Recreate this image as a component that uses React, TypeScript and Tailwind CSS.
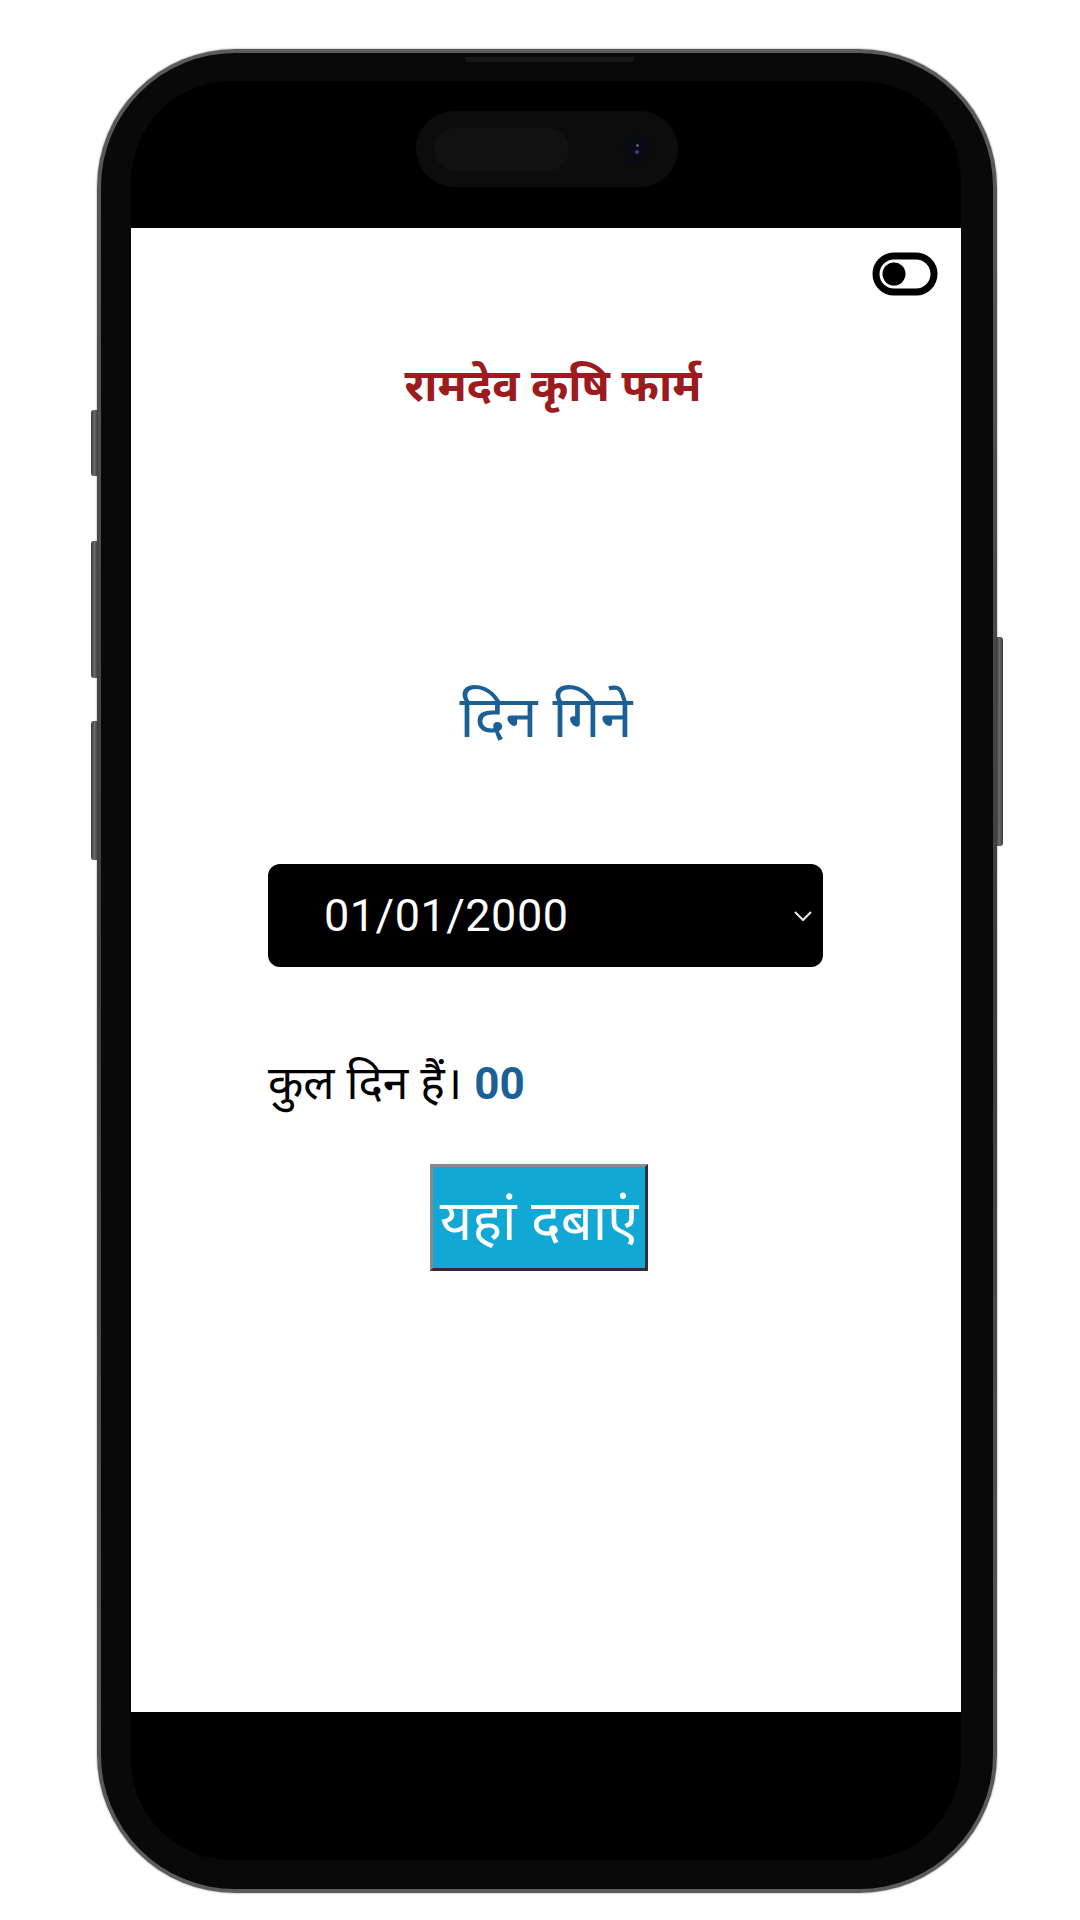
import { useState } from "react";

const SideButton = ({ className }: { className: string }) => (
  <div
    className={`absolute w-[7px] bg-gradient-to-r from-[#3a3a3a] via-[#6a6a6a] to-[#3a3a3a] ${className}`}
  />
);

const ToggleIcon = () => (
  <svg width="66" height="44" viewBox="0 0 66 44" fill="none">
    <rect x="4" y="4" width="58" height="36" rx="18" stroke="#000" strokeWidth="7" />
    <circle cx="22" cy="22" r="11.5" fill="#000" />
  </svg>
);

export default function App() {
  const [date] = useState("01/01/2000");
  const [days] = useState("00");

  return (
    <div
      className="w-[1080px] h-[1920px] bg-white flex pl-[97px] pt-[49px]"
      style={{ fontFamily: "'Noto Sans', Roboto, sans-serif" }}
    >
      <div className="relative w-[900px] h-[1844px]">
        {/* side buttons */}
        <SideButton className="left-[-6px] top-[361px] h-[66px] rounded-l-[3px]" />
        <SideButton className="left-[-6px] top-[492px] h-[137px] rounded-l-[3px]" />
        <SideButton className="left-[-6px] top-[672px] h-[139px] rounded-l-[3px]" />
        <SideButton className="left-[899px] top-[588px] h-[209px] rounded-r-[3px]" />

        <div className="w-full h-full rounded-[138px] p-[4px] bg-gradient-to-b from-[#5c5c5c] via-[#3c3c3c] to-[#5c5c5c] shadow-[0_0_2px_rgba(0,0,0,0.5)]">
          <div className="relative w-full h-full rounded-[134px] bg-[#090909] pl-[30px] pr-[32px] pt-[28px] pb-[29px] flex">
            {/* speaker slit */}
            <div className="absolute left-[364px] top-[4px] w-[169px] h-[5px] rounded-b-[4px] bg-[#161616]" />

            <div className="flex-1 rounded-[100px] bg-black flex flex-col overflow-hidden">
              {/* dynamic island */}
              <div className="h-[147px] flex justify-center pt-[30px] pl-[2px]">
                <div className="w-[262px] h-[76px] rounded-full bg-[#0c0c0c] flex items-center pl-[18px] pr-[26px]">
                  <div className="w-[135px] h-[43px] rounded-full bg-[#111111]" />
                  <div className="ml-auto w-[30px] h-[30px] rounded-full bg-[#0a0a12] flex flex-col items-center justify-center gap-[3px]">
                    <div className="w-[3px] h-[3px] rounded-full bg-[#5a5a8a]" />
                    <div className="w-[4px] h-[4px] rounded-full bg-[#3b3b9a]" />
                  </div>
                </div>
              </div>

              {/* screen */}
              <div className="h-[1484px] bg-white flex flex-col">
                <div className="flex justify-end pt-[24px] pr-[23px]">
                  <ToggleIcon />
                </div>

                <h1 className="mt-[58px] pl-[14px] text-center text-[45px] font-bold text-[#9b1b1f] leading-[60px]">
                  रामदेव कृषि फार्म
                </h1>

                <h2 className="mt-[266px] text-center text-[58px] text-[#1a5f96] leading-[70px]">
                  दिन गिने
                </h2>

                <div className="mt-[114px] ml-[137px] w-[555px] h-[103px] rounded-[12px] bg-black flex items-center pl-[56px] pr-[10px]">
                  <span
                    className="text-white text-[45px] tracking-[0.5px]"
                    style={{ fontFamily: "Roboto, sans-serif" }}
                  >
                    {date}
                  </span>
                  <svg className="ml-auto" width="20" height="12" viewBox="0 0 20 12" fill="none">
                    <path d="M2 2l8 8 8-8" stroke="#e5e5e5" strokeWidth="2.2" />
                  </svg>
                </div>

                <p className="mt-[84px] ml-[137px] text-[46px] text-black leading-[60px]">
                  कुल दिन हैं।{" "}
                  <span className="font-bold text-[#1a5f96] text-[44px]" style={{ fontFamily: "Roboto, sans-serif" }}>
                    {days}
                  </span>
                </p>

                <div className="mt-[50px] flex justify-center pr-[14px]">
                  <button className="w-[218px] h-[107px] bg-[#12a8d6] text-white text-[56px] leading-none border-[3px] border-t-[#8a8a8a] border-l-[#8a8a8a] border-r-[#2f2f2f] border-b-[#2f2f2f] flex items-center justify-center whitespace-nowrap">
                    यहां दबाएं
                  </button>
                </div>
              </div>

              <div className="flex-1" />
            </div>
          </div>
        </div>
      </div>
    </div>
  );
}
